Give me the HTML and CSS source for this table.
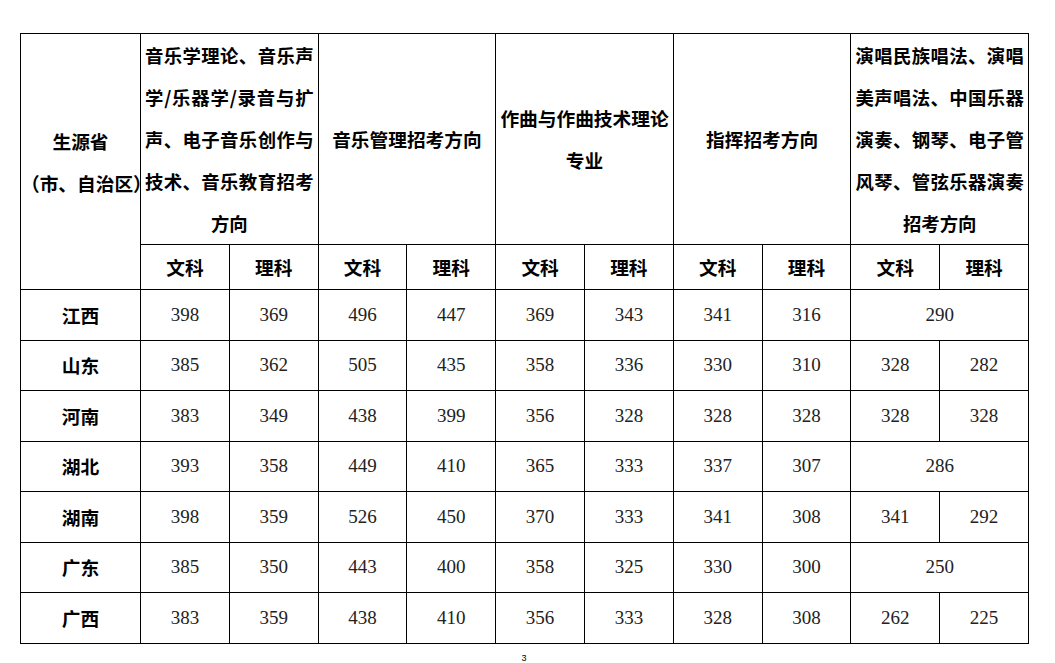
FILE: index.html
```html
<!DOCTYPE html>
<html lang="zh-CN">
<head>
<meta charset="utf-8">
<title>录取分数线</title>
<link rel="stylesheet" href="styles.css">
</head>
<body>
<div class="page">
<table class="scores">
<colgroup><col class="c-prov"><col span="10" class="c-num"></colgroup>
<thead>
<tr class="h1">
<th rowspan="2" class="prov-h"><div class="ln">生源省</div><div class="ln">（市、自治区）</div></th>
<th colspan="2" class="just"><div class="ln">音乐学理论、音乐声</div><div class="ln">学/乐器学/录音与扩</div><div class="ln">声、电子音乐创作与</div><div class="ln">技术、音乐教育招考</div><div class="ln last">方向</div></th>
<th colspan="2">音乐管理招考方向</th>
<th colspan="2"><div class="ln">作曲与作曲技术理论</div><div class="ln">专业</div></th>
<th colspan="2">指挥招考方向</th>
<th colspan="2" class="just"><div class="ln">演唱民族唱法、演唱</div><div class="ln">美声唱法、中国乐器</div><div class="ln">演奏、钢琴、电子管</div><div class="ln">风琴、管弦乐器演奏</div><div class="ln last">招考方向</div></th>
</tr>
<tr class="h2">
<th>文科</th><th>理科</th><th>文科</th><th>理科</th><th>文科</th><th>理科</th><th>文科</th><th>理科</th><th>文科</th><th>理科</th>
</tr>
</thead>
<tbody>
<tr><th>江西</th><td>398</td><td>369</td><td>496</td><td>447</td><td>369</td><td>343</td><td>341</td><td>316</td><td colspan="2">290</td></tr>
<tr><th>山东</th><td>385</td><td>362</td><td>505</td><td>435</td><td>358</td><td>336</td><td>330</td><td>310</td><td>328</td><td>282</td></tr>
<tr><th>河南</th><td>383</td><td>349</td><td>438</td><td>399</td><td>356</td><td>328</td><td>328</td><td>328</td><td>328</td><td>328</td></tr>
<tr><th>湖北</th><td>393</td><td>358</td><td>449</td><td>410</td><td>365</td><td>333</td><td>337</td><td>307</td><td colspan="2">286</td></tr>
<tr><th>湖南</th><td>398</td><td>359</td><td>526</td><td>450</td><td>370</td><td>333</td><td>341</td><td>308</td><td>341</td><td>292</td></tr>
<tr><th>广东</th><td>385</td><td>350</td><td>443</td><td>400</td><td>358</td><td>325</td><td>330</td><td>300</td><td colspan="2">250</td></tr>
<tr><th>广西</th><td>383</td><td>359</td><td>438</td><td>410</td><td>356</td><td>333</td><td>328</td><td>308</td><td>262</td><td>225</td></tr>
</tbody>
</table>
<div class="pageno">3</div>
</div>
</body>
</html>
```

FILE: styles.css
```css
html, body {
  margin: 0;
  padding: 0;
  background: #fff;
}
.page {
  padding: 33px 0 0 20px;
  width: 1008px;
}
.scores {
  border-collapse: collapse;
  table-layout: fixed;
  width: 1008px;
  color: #000;
}
.c-prov { width: 120px; }
.c-num { width: 88.8px; }
.scores th,
.scores td {
  border: 1px solid #000;
  padding: 0;
  text-align: center;
  vertical-align: middle;
}
.scores th {
  font-family: "Noto Sans CJK SC", "Noto Sans", sans-serif;
  font-weight: 700;
  font-size: 18.7px;
  line-height: 42px;
  white-space: nowrap;
}
.scores td {
  font-family: "Liberation Serif", "Noto Sans CJK SC", serif;
  font-size: 19px;
  color: #222;
}
.h1 th { height: 209px; }
.h2 th { height: 44px; }
.scores tbody tr { height: 50.5px; }
.prov-h { overflow: visible; }
.scores .just {
  padding: 0 4px;
  font-size: 18.4px;
}
.just .ln {
  text-align: justify;
  text-align-last: justify;
  white-space: nowrap;
}
.just .ln.last {
  text-align: center;
  text-align-last: center;
}
.pageno {
  width: 1008px;
  text-align: center;
  font-family: "Liberation Sans", sans-serif;
  font-size: 9px;
  margin-top: 9px;
  color: #000;
}
```
